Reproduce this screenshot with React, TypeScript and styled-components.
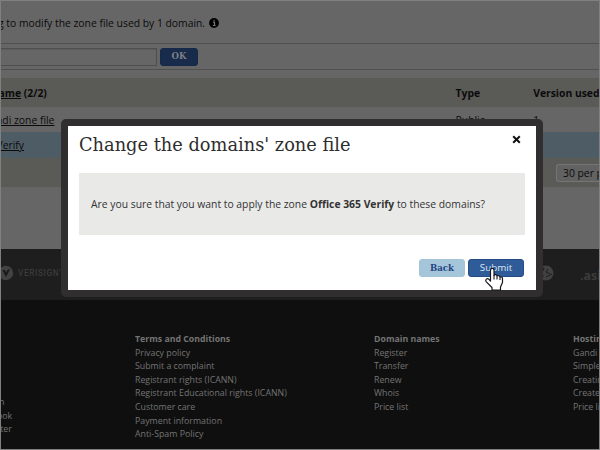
import React from "react";
import styled, { createGlobalStyle } from "styled-components";

const Global = createGlobalStyle`
  * { box-sizing: border-box; }
  body { margin: 0; background: #666; }
`;

const Frame = styled.main`
  position: relative;
  width: 600px;
  height: 450px;
  border: 1px solid #808080;
  overflow: hidden;
  background: #666;
  color: #0b0b0b;
  font: 10.35px/14px "Open Sans", "Noto Sans", sans-serif;
  white-space: nowrap;
`;
const Notice = styled.div`
  display: flex;
  align-items: center;
  height: 42px;
  padding-top: 2px;
`;
const Clip = styled.span<{ $shift: number }>`
  margin-left: ${(p) => -p.$shift}px;
`;
const InfoIcon = styled.svg`
  margin-left: 4px;
`;
const Search = styled.form`
  display: flex;
  align-items: center;
  gap: 3px;
  height: 27px;
  border-top: 1px solid #505050;
  border-bottom: 1px solid #505050;
`;
const Field = styled.div`
  width: 156px;
  height: 18px;
  border: 1px solid #4e4e4e;
  border-left: 0;
  box-shadow: inset 0 1px 1px #5c5c5c;
`;
const Button = styled.button<{ $kind: "dim" | "light" | "dark"; $width: number }>`
  width: ${(p) => p.$width}px;
  height: 18px;
  padding: 0 0 1px;
  border: 1px solid ${(p) => ({ dim: "#14294a", light: "#a4c5d9", dark: "#234d89" })[p.$kind]};
  border-radius: 3px;
  background: ${(p) => ({ dim: "#182b4a", light: "#a5c6da", dark: "#2f5c98" })[p.$kind]};
  color: ${(p) => ({ dim: "#7b8088", light: "#1f4480", dark: "#dce6f2" })[p.$kind]};
  font: ${(p) => (p.$kind === "dark" ? '9.8px/14px "Open Sans", sans-serif' : 'bold 9.5px/14px "DejaVu Serif Condensed", "DejaVu Serif", serif')};
`;
const Table = styled.section`
  margin-top: 8px;
`;
const Row = styled.div<{ $height: number; $tone: string; $bold?: boolean }>`
  display: grid;
  grid-template-columns: 454.6px 77.6px 1fr;
  align-items: center;
  height: ${(p) => p.$height}px;
  background: ${(p) => p.$tone};
  font-weight: ${(p) => (p.$bold ? 700 : 400)};
`;
const Pager = styled.div`
  display: flex;
  align-items: center;
  justify-content: flex-end;
  height: 29px;
  background: #5a5a57;
`;
const Select = styled.div`
  width: 43px;
  height: 18px;
  padding: 1px 0 0 6px;
  border: 1px solid #757575;
  border-right: 0;
  border-radius: 3px 0 0 3px;
  background: #626262;
  overflow: hidden;
`;
const LogoBand = styled.div`
  display: flex;
  align-items: center;
  height: 51px;
  margin-top: 62px;
  padding-bottom: 3px;
  background: #1e1e1e;
  color: #3b3b3b;
`;
const LogoMark = styled.svg`
  flex: none;
`;
const Verisign = styled.span`
  flex: none;
  width: 514px;
  padding-left: 4px;
  font: 500 8.2px/12px Roboto, sans-serif;
  letter-spacing: 0.65px;
`;
const Asia = styled.span`
  flex: none;
  padding: 5px 0 0 25px;
  font: bold 12.5px/14px "Open Sans", sans-serif;
`;
const Footer = styled.footer`
  display: grid;
  grid-template-columns: 134px 239px 199px 60px;
  height: 150px;
  padding-top: 33px;
  background: #0f0f0f;
  color: #747474;
  font-size: 8.8px;
  line-height: 13.6px;
`;
const LinkColumn = styled.div<{ $drop?: number }>`
  padding-top: ${(p) => p.$drop ?? 0}px;
`;
const LinkLine = styled.div<{ $shift?: number }>`
  margin-left: ${(p) => -(p.$shift ?? 0)}px;
`;
const LinkHead = styled.div`
  font-weight: 700;
  font-size: 8.75px;
`;

const Dialog = styled.section`
  position: absolute;
  left: 60px;
  top: 118px;
  display: flex;
  flex-direction: column;
  width: 482px;
  height: 178px;
  border: 7px solid #302e2f;
  border-radius: 5px;
  padding: 8px 11px 13px;
  background: #fff;
  color: #333;
`;
const DialogHead = styled.header`
  display: flex;
  justify-content: space-between;
  height: 39px;
`;
const Title = styled.h1`
  margin: 0;
  color: #2d2d2d;
  font: 400 17.8px/22px "DejaVu Serif", serif;
`;
const CloseIcon = styled.svg`
  margin: 1px 4px 0 0;
`;
const Message = styled.p`
  display: flex;
  align-items: center;
  height: 62px;
  margin: 0 0 24px;
  padding-left: 12px;
  background: #e9e9e8;
  white-space: pre;
`;
const Actions = styled.div`
  display: flex;
  justify-content: flex-end;
  gap: 3px;
  padding-right: 1px;
`;
const Pointer = styled.svg`
  position: absolute;
  left: 483px;
  top: 266px;
`;

const columns = [
  ["Terms and Conditions", "Privacy policy", "Submit a complaint", "Registrant rights (ICANN)", "Registrant Educational rights (ICANN)", "Customer care", "Payment information", "Anti-Spam Policy"],
  ["Domain names", "Register", "Transfer", "Renew", "Whois", "Price list"],
  ["Hosting", "Gandi", "Simple", "Creating", "Create", "Price list"],
];

export default function App() {
  return (
    <>
      <Global />
      <Frame>
        <Notice>
          <Clip $shift={3}>g to modify the zone file used by 1 domain.</Clip>
          <InfoIcon width="10" height="10" viewBox="0 0 10 10">
            <circle cx="5" cy="5" r="4.9" fill="#000" />
            <path d="M4 4.2h1.5v3.2M3.8 7.5h2.8M4.5 2.4h1" stroke="#777" strokeWidth="1.2" fill="none" />
          </InfoIcon>
        </Notice>
        <Search>
          <Field />
          <Button type="button" $kind="dim" $width={38}>OK</Button>
        </Search>
        <Table>
          <Row $height={29} $tone="#5a5a57" $bold>
            <Clip $shift={2.5}><u>ame</u> (2/2)</Clip>
            <span>Type</span>
            <span>Version used</span>
          </Row>
          <Row $height={25} $tone="#666">
            <Clip $shift={5}><u>ndi zone file</u></Clip>
            <span>Public</span>
            <span>1</span>
          </Row>
          <Row $height={26} $tone="#4e5c65">
            <Clip $shift={4.5}><u>Verify</u></Clip>
          </Row>
          <Pager><Select>30 per page</Select></Pager>
        </Table>
        <LogoBand>
          <LogoMark width="13" height="16" viewBox="0 0 13 16">
            <circle cx="5" cy="8" r="7.2" fill="#424242" />
            <path d="M1.5 5l3.5 7 4-8-2.3.8L5 8 4 5z" fill="#171717" />
          </LogoMark>
          <Verisign>VERISIGN'</Verisign>
          <LogoMark width="27" height="18" viewBox="0 0 27 18">
            <circle cx="18" cy="9" r="7.5" fill="#414141" />
            <path d="M12 5l4-1-1 3M20 5l-2 3 4 2M12 10l4 2M18 13l6-3" stroke="#1e1e1e" fill="none" />
          </LogoMark>
          <Asia>.asia</Asia>
        </LogoBand>
        <Footer>
          <LinkColumn $drop={63}>
            <LinkLine $shift={2}>n</LinkLine>
            <LinkLine $shift={4}>ook</LinkLine>
            <LinkLine $shift={4}>tter</LinkLine>
          </LinkColumn>
          {columns.map(([head, ...links]) => (
            <LinkColumn key={head}>
              <LinkHead>{head}</LinkHead>
              {links.map((link) => <LinkLine key={link}>{link}</LinkLine>)}
            </LinkColumn>
          ))}
        </Footer>
        <Dialog role="dialog">
          <DialogHead>
            <Title>Change the domains' zone file</Title>
            <CloseIcon width="9" height="9" viewBox="0 0 9 9">
              <path d="M1.2 1.2l6.6 6.6M7.8 1.2L1.2 7.8" stroke="#111" strokeWidth="2" />
            </CloseIcon>
          </DialogHead>
          <Message>Are you sure that you want to apply the zone <b>Office 365 Verify</b> to these domains?</Message>
          <Actions>
            <Button $kind="light" $width={46}>Back</Button>
            <Button $kind="dark" $width={56}>Submit</Button>
          </Actions>
        </Dialog>
        <Pointer width="20" height="25" viewBox="0 0 20 25">
          <path d="M6.5 14V3.2C6.5.8 10 .8 10 3.2V8.5C11 7 13 7.5 13 9.2 14.2 8 16 8.8 16 10.2 17 9.4 18.5 10 18.5 11.6V15.5L16.5 20V23H8V20.5L2.3 14.8C.6 12.6 3.2 10.6 5 12.4z" fill="#fff" stroke="#151520" strokeWidth="1.2" strokeLinejoin="round" />
          <path d="M10 8.5v4M13 9.5v3M16 10.5v2.5" stroke="#151520" strokeWidth="1.1" />
        </Pointer>
      </Frame>
    </>
  );
}
